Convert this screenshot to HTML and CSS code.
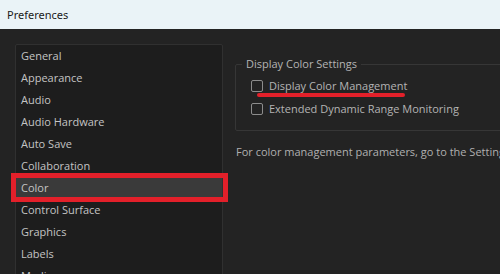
FILE: index.html
```html
<!DOCTYPE html>
<html>
<head>
<meta charset="utf-8">
<link rel="stylesheet" href="styles.css">
</head>
<body>
<div class="titlebar">Preferences</div>
<div class="main">
  <div class="sidebar">
    <div class="item">General</div>
    <div class="item">Appearance</div>
    <div class="item">Audio</div>
    <div class="item">Audio Hardware</div>
    <div class="item">Auto Save</div>
    <div class="item">Collaboration</div>
    <div class="item selected">Color<span class="redbox"></span></div>
    <div class="item">Control Surface</div>
    <div class="item">Graphics</div>
    <div class="item">Labels</div>
    <div class="item">Media</div>
  </div>
  <div class="content">
    <fieldset class="group">
      <legend>Display Color Settings</legend>
      <label class="check first"><span class="box"></span><span class="lbl">Display Color Management</span><span class="redline"></span></label>
      <label class="check"><span class="box"></span><span class="lbl">Extended Dynamic Range Monitoring</span></label>
    </fieldset>
    <p class="note">For color management parameters, go to the Settings</p>
  </div>
</div>
</body>
</html>
```
FILE: styles.css
```css
html, body {
  margin: 0;
  padding: 0;
  width: 500px;
  height: 274px;
  overflow: hidden;
  background: #232323;
  font-family: "Open Sans", "Noto Sans", sans-serif;
}
.titlebar {
  height: 29px;
  background: #eaf3f7;
  color: #1a1a1a;
  font-family: "Noto Sans", "Open Sans", sans-serif;
  font-size: 11px;
  line-height: 29px;
  padding-left: 7px;
  box-sizing: border-box;
}
.main {
  display: flex;
  padding: 15px 0 0 15px;
  gap: 12px;
}
.sidebar {
  width: 208px;
  flex: none;
  box-sizing: border-box;
  height: 260px;
  background: #1d1d1d;
  border: 1px solid #303030;
  border-radius: 2px;
}
.item {
  position: relative;
  height: 22px;
  line-height: 22px;
  padding-left: 5px;
  font-size: 11px;
  color: #c4c4c4;
  white-space: nowrap;
}
.item.selected {
  background: #3a3a3a;
}
.redbox {
  position: absolute;
  left: -5px;
  right: -6px;
  top: -4px;
  bottom: -3px;
  border: 5px solid #e3202a;
}
.content {
  flex: 1;
  padding-top: 13px;
  min-width: 0;
}
.group {
  margin: 0;
  margin-right: -20px;
  border: 1px solid #363636;
  border-radius: 2px;
  padding: 3px 0 10px 15px;
  min-width: 0;
}
.group legend {
  font-size: 11px;
  color: #b4b4b4;
  padding: 0 4px;
  margin-left: -9px;
  line-height: 14px;
}
.check {
  position: relative;
  display: flex;
  align-items: center;
  height: 23px;
  gap: 6px;
  font-size: 11px;
  color: #b4b4b4;
  white-space: nowrap;
}
.box {
  width: 10px;
  height: 10px;
  border: 1px solid #8c8c8c;
  border-radius: 2px;
  flex: none;
}
.redline {
  position: absolute;
  left: 6px;
  width: 148px;
  top: 19px;
  height: 4px;
  border-radius: 2px;
  background: #e3202a;
}
.note {
  margin: 13px 0 0 1px;
  font-size: 11px;
  color: #b0b0b0;
  white-space: nowrap;
  line-height: 16px;
}
```
